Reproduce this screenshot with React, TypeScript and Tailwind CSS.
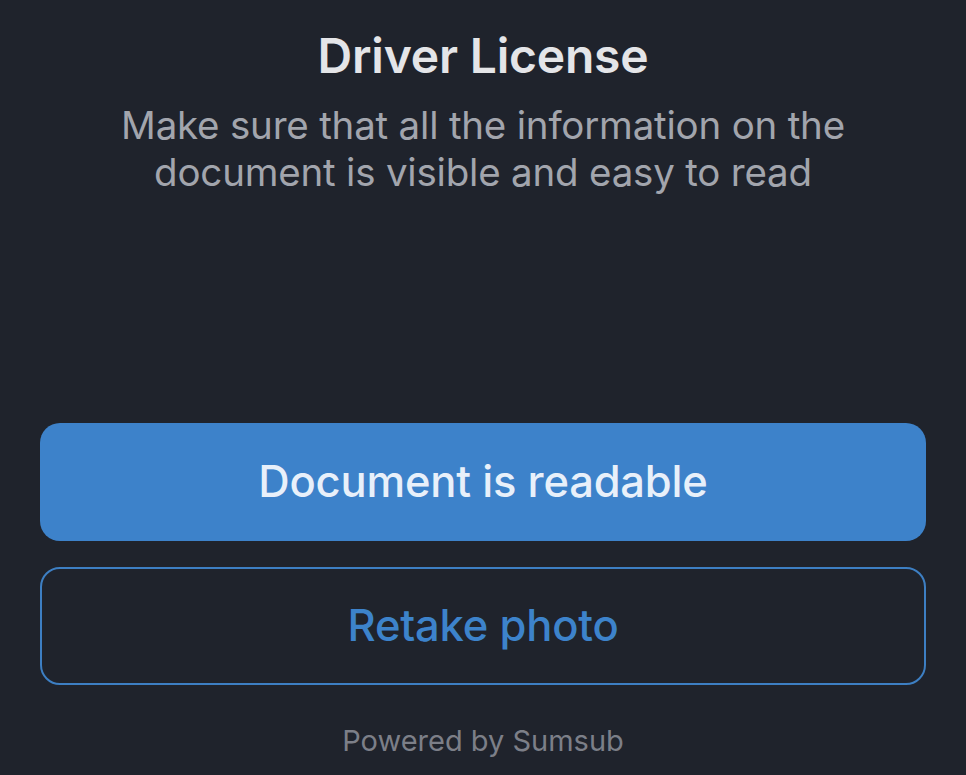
import React from 'react'

const App: React.FC = () => {
  return (
    <div className="w-[966px] h-[775px] bg-[#1f232c] flex flex-col items-center overflow-hidden font-['Inter',sans-serif]">
      <h1 className="mt-[26px] text-[48px] leading-[60px] font-semibold text-[#e4e5e8] tracking-[-0.2px]">Driver License</h1>
      <p className="mt-[16px] text-[38.5px] leading-[47px] text-[#a2a5ad] text-center tracking-[-0.2px]">
        Make sure that all the information on the
        <br />
        document is visible and easy to read
      </p>
      <div className="mt-auto w-full px-[40px] flex flex-col gap-[26px]">
        <button className="h-[118px] w-full rounded-[20px] bg-[#3d82ca] text-[43.5px] font-medium text-[#e8f0fa] tracking-[-0.2px]">
          Document is readable
        </button>
        <button className="h-[118px] w-full rounded-[20px] border-2 border-[#3d7fc3] text-[43.5px] font-medium text-[#3d83cb] tracking-[-0.2px]">
          Retake photo
        </button>
      </div>
      <p className="mt-[37px] mb-[15px] text-[29px] leading-[38px] text-[#7c7f88]">Powered by Sumsub</p>
    </div>
  )
}

export default App
